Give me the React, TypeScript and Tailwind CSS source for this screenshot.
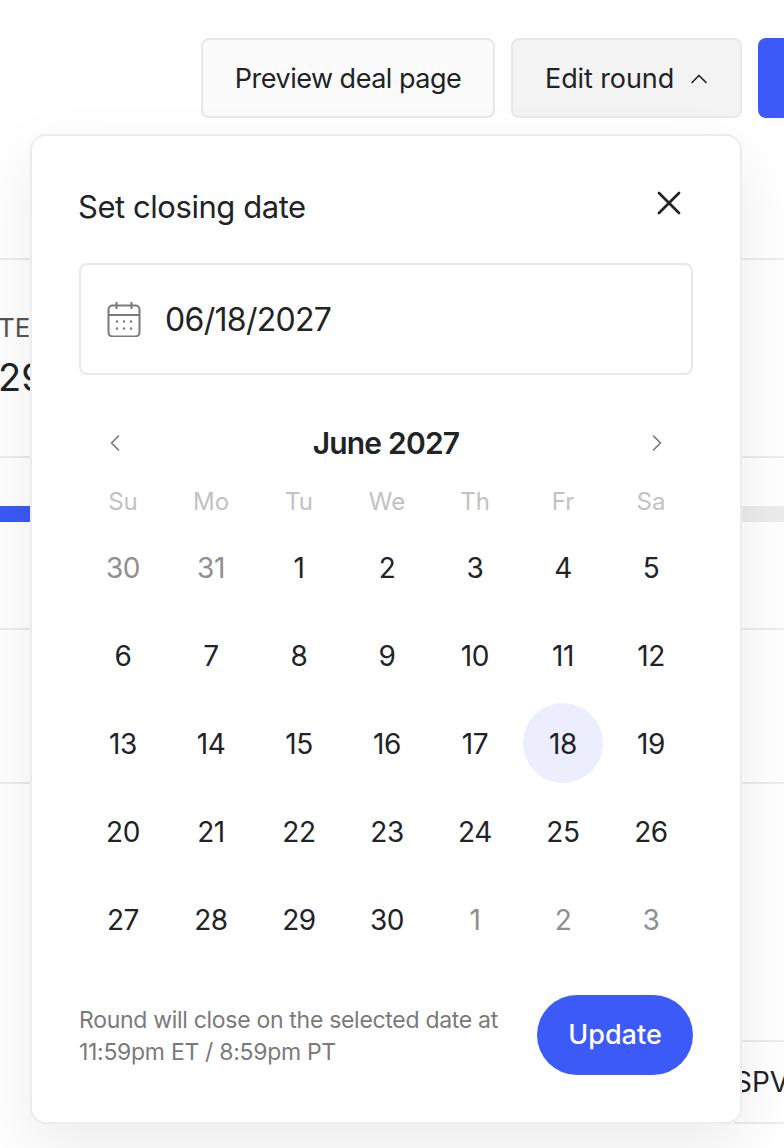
import React from 'react';
import { ChevronLeft, ChevronRight, ChevronUp, X } from 'lucide-react';

const WEEKDAYS = ['Su', 'Mo', 'Tu', 'We', 'Th', 'Fr', 'Sa'];

const DAYS = [
  { label: '30', muted: true }, { label: '31', muted: true },
  ...Array.from({ length: 30 }, (_, i) => ({ label: String(i + 1), muted: false })),
  { label: '1', muted: true }, { label: '2', muted: true }, { label: '3', muted: true },
];

const CalendarIcon = () => (
  <svg width="34" height="36" viewBox="0 0 34 36" fill="none" stroke="#7b7b7b" strokeWidth="2">
    <rect x="1.5" y="4.5" width="31" height="31" rx="4" />
    <path d="M1.5 14h31M9.5 1v7M24.5 1v7" />
    <g fill="#7b7b7b" stroke="none">
      <circle cx="10" cy="20.5" r="1.2" /><circle cx="17" cy="20.5" r="1.2" /><circle cx="24" cy="20.5" r="1.2" />
      <circle cx="10" cy="27.5" r="1.2" /><circle cx="17" cy="27.5" r="1.2" /><circle cx="24" cy="27.5" r="1.2" />
    </g>
  </svg>
);

const App: React.FC = () => {
  return (
    <div className="relative w-[784px] h-[1148px] overflow-hidden bg-white text-[#222326] font-['Inter',sans-serif]">
      {/* Page behind the popover */}
      <header className="flex justify-end gap-4 h-[260px] pt-[38px] border-b-2 border-[#ececec] -mr-[74px]">
        <button className="w-[294px] h-[80px] pt-[2px] rounded-lg border-2 border-[#e8e8e8] bg-[#fbfbfb] text-[27px] tracking-[-0.5px]">
          Preview deal page
        </button>
        <button className="w-[231px] h-[80px] pt-[2px] pl-[32px] rounded-lg border-2 border-[#e8e8e8] bg-[#f3f3f3] flex items-center gap-[11px] text-[27px] tracking-[-0.1px]">
          Edit round
          <ChevronUp size={28} strokeWidth={1.5} />
        </button>
        <div className="w-[100px] h-[80px] rounded-lg bg-[#3b5af7]" />
      </header>

      <section className="flex flex-col items-start h-[198px] pt-[53px] gap-[12px] border-b-2 border-[#ececec]">
        <span className="-ml-[2px] text-[26px] leading-[30px] text-[#555]">TE</span>
        <span className="text-[38px] leading-[44px] -ml-[2px]">29</span>
      </section>

      <section className="flex items-start h-[172px] pt-[48px] border-b-2 border-[#ececec]">
        <div className="w-1/2 h-4 bg-[#3b5af7]" />
        <div className="w-1/2 h-4 bg-[#ececec]" />
      </section>

      <section className="h-[154px] border-b-2 border-[#ececec]" />

      <section className="flex justify-end h-[340px] pt-[256px]">
        <div className="w-[50px] h-[84px] border-y-2 border-[#ececec] flex items-center overflow-hidden text-[28px] whitespace-nowrap">
          SPV
        </div>
      </section>

      {/* Closing date popover */}
      <div className="absolute left-[30px] top-[134px] w-[712px] h-[990px] flex flex-col rounded-2xl border-2 border-[#ececec] bg-white px-[47px] shadow-[0_24px_64px_rgba(0,0,0,0.08)]">
        <div className="flex items-center justify-between mt-[51px] h-[40px]">
          <h2 className="-ml-[1px] text-[31px] leading-[40px] tracking-[-0.45px] font-normal">Set closing date</h2>
          <X size={40} strokeWidth={1.6} className="mr-[4px] -mt-[8px]" />
        </div>

        <div className="flex items-center gap-[24px] h-[112px] mt-[36px] px-[26px] rounded-lg border-2 border-[#e8e8e8]">
          <CalendarIcon />
          <span className="pt-[2px] text-[32px] tracking-[-0.7px]">06/18/2027</span>
        </div>

        <div className="flex items-center justify-between h-[40px] mt-[48px] px-[22px]">
          <ChevronLeft size={28} strokeWidth={1.4} color="#777" />
          <span className="text-[30px] font-semibold tracking-[-0.8px]">June 2027</span>
          <ChevronRight size={28} strokeWidth={1.4} color="#777" />
        </div>

        <div className="grid grid-cols-[repeat(7,88px)] mt-[19px]">
          {WEEKDAYS.map((d) => (
            <span key={d} className="h-[40px] flex items-center justify-center text-[24px] text-[#c2c2c2]">
              {d}
            </span>
          ))}
        </div>

        <div className="grid grid-cols-[repeat(7,88px)] auto-rows-[88px] mt-[1px]">
          {DAYS.map((d, i) => (
            <div key={i} className="flex items-center justify-center">
              <span
                className={`w-[80px] h-[80px] pt-[1px] rounded-full flex items-center justify-center text-[28px] tracking-[-0.4px] ${
                  d.muted ? 'text-[#8f8f8f]' : ''
                } ${!d.muted && d.label === '18' ? 'bg-[#eceefd]' : ''}`}
              >
                {d.label}
              </span>
            </div>
          ))}
        </div>

        <div className="flex items-center justify-between mt-[32px]">
          <p className="pt-[1px] text-[23px] leading-[32px] tracking-[-0.3px] text-[#7a7a7a]">
            Round will close on the selected date at
            <br />
            11:59pm ET / 8:59pm PT
          </p>
          <button className="w-[156px] h-[80px] rounded-full bg-[#3b5af7] text-white text-[27px] font-medium shrink-0">
            Update
          </button>
        </div>
      </div>
    </div>
  );
};

export default App;
